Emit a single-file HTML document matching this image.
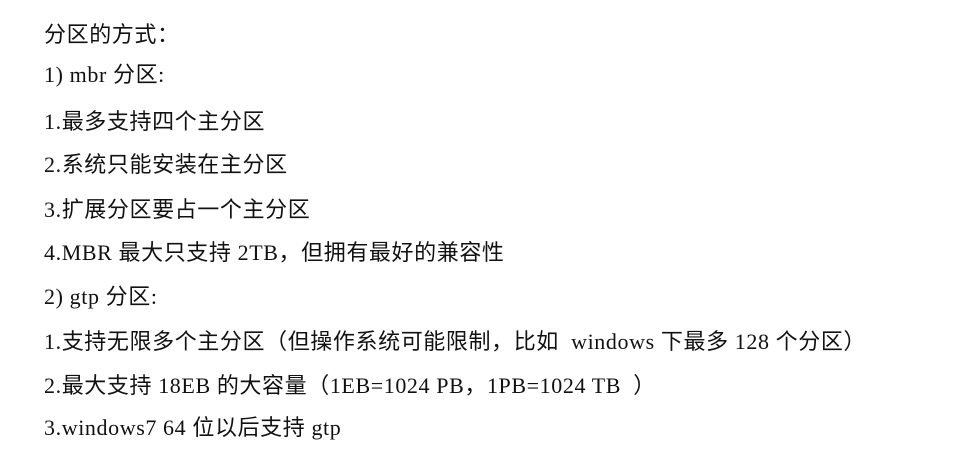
<!DOCTYPE html>
<html><head><meta charset="utf-8"><style>
body{margin:0;width:969px;height:449px;background:#fff;overflow:hidden;position:relative;font-family:"Liberation Serif","Noto Sans CJK SC",serif;color:#111;}
.l{position:absolute;left:44px;font-size:22px;line-height:26px;white-space:pre;letter-spacing:0.6px;}
</style></head><body>
<div class="l" style="top:22px">分区的方式：</div>
<div class="l" style="top:62px">1) mbr 分区:</div>
<div class="l" style="top:109px">1.最多支持四个主分区</div>
<div class="l" style="top:152px">2.系统只能安装在主分区</div>
<div class="l" style="top:197px">3.扩展分区要占一个主分区</div>
<div class="l" style="top:240px">4.MBR 最大只支持 2TB，但拥有最好的兼容性</div>
<div class="l" style="top:284px">2) gtp 分区:</div>
<div class="l" style="top:329px">1.支持无限多个主分区（但操作系统可能限制，比如  windows 下最多 128 个分区）</div>
<div class="l" style="top:373px">2.最大支持 18EB 的大容量（1EB=1024 PB，1PB=1024 TB  ）</div>
<div class="l" style="top:415px">3.windows7 64 位以后支持 gtp</div>
</body></html>
